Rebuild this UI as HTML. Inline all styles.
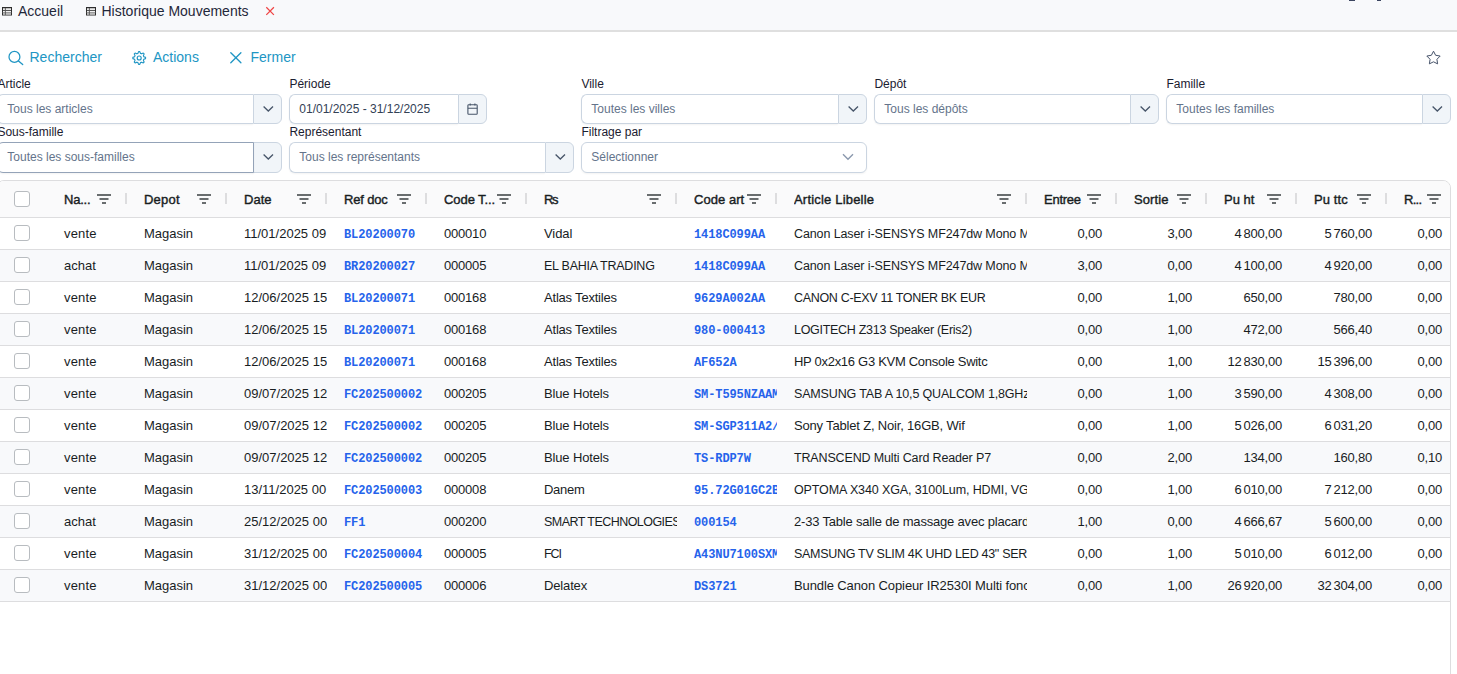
<!DOCTYPE html>
<html lang="fr"><head><meta charset="utf-8"><title>Historique Mouvements</title>
<style>
*{box-sizing:border-box}
html,body{margin:0;padding:0}
body{width:1457px;height:674px;overflow:hidden;position:relative;background:#fff;font-family:"Liberation Sans",sans-serif;color:#1f2937}
.abs{position:absolute}
#topbar{position:absolute;left:0;top:0;width:1457px;height:32px;background:#f8f9fb;border-bottom:2px solid #dfdfdf}
.tab{position:absolute;top:3px;font-size:14px;line-height:16px;color:#1f2739;white-space:nowrap}
.tb{position:absolute;top:49px;font-size:14px;line-height:16px;color:#2196c4;white-space:nowrap}
.lbl{position:absolute;font-size:12px;line-height:14px;color:#1b2030;white-space:nowrap}
.fld{position:absolute;height:30px;border:1px solid #cbd5e1;border-radius:6px;background:#fff;box-shadow:0 1px 2px rgba(18,18,23,.05);font-size:12px;line-height:28px;color:#64748b;padding-left:9.3px;white-space:nowrap;overflow:hidden}
.fld.in{border-radius:6px 0 0 6px;border-right:none}
.btn{position:absolute;height:30px;width:29px;border:1px solid #cbd5e1;border-radius:0 6px 6px 0;background:#f1f5f9}
.btn svg{position:absolute;left:0;top:0}
svg{display:block;overflow:visible}

#grid{position:absolute;left:-4px;top:180px;width:1455px;height:520px;border:1px solid #dddddf;border-radius:8px;overflow:hidden;background:#fff;font-size:13px;color:#181d1f}
#ghead{position:absolute;left:0;top:0;width:1460px;height:37px;background:#fafafb;border-bottom:1px solid #dddddf}
.hc{position:absolute;top:0;height:36px;line-height:38px;font-weight:400;color:#181d1f;-webkit-text-stroke:0.4px #181d1f;white-space:nowrap;overflow:hidden}
.hl{position:absolute;left:17px;top:0;right:32px;overflow:hidden;text-overflow:clip;white-space:nowrap}
.fi{position:absolute;right:16px;top:13px}
.sep{position:absolute;right:0;top:12px;width:2px;height:11px;background:#dddddf}
.row{position:absolute;left:0;width:1460px;height:32px;border-bottom:1px solid #dddddf;background:#fff}
.row.odd{background:#f8f9fb}
.c{position:absolute;top:0;height:31px;line-height:32px;white-space:nowrap;overflow:hidden;padding-left:17px}
.c.t2{letter-spacing:-0.2px}
.c.n{text-align:right;padding-left:0;padding-right:15px;word-spacing:-1.6px;letter-spacing:-0.2px}
.c.m{font-family:"Liberation Mono",monospace;font-weight:700;font-size:12px;color:#2563eb;letter-spacing:-0.1px;line-height:34px}
.cb{position:absolute;left:17px;width:16px;height:16px;border:1px solid #b8bcc0;border-radius:3px;background:#fff}
</style></head>
<body>
<div id="topbar"><svg class="abs" style="left:2px;top:6.7px" width="10" height="8.5" viewBox="0 0 10 8.5"><rect x="0.5" y="0.5" width="9" height="7.5" fill="#fff" stroke="#2e2e2e" stroke-width="1"/><rect x="1" y="5.4" width="8" height="2.2" fill="#b9b9b9"/><rect x="0" y="0" width="10" height="1.3" fill="#2e2e2e"/><rect x="0.5" y="2.9" width="9" height="0.9" fill="#2e2e2e"/><rect x="0.5" y="4.9" width="9" height="0.7" fill="#777"/><rect x="2.9" y="1" width="0.9" height="7" fill="#555"/></svg><div class="tab" style="left:18px">Accueil</div><svg class="abs" style="left:85.9px;top:6.7px" width="10" height="8.5" viewBox="0 0 10 8.5"><rect x="0.5" y="0.5" width="9" height="7.5" fill="#fff" stroke="#2e2e2e" stroke-width="1"/><rect x="1" y="5.4" width="8" height="2.2" fill="#b9b9b9"/><rect x="0" y="0" width="10" height="1.3" fill="#2e2e2e"/><rect x="0.5" y="2.9" width="9" height="0.9" fill="#2e2e2e"/><rect x="0.5" y="4.9" width="9" height="0.7" fill="#777"/><rect x="2.9" y="1" width="0.9" height="7" fill="#555"/></svg><div class="tab" style="left:101.5px">Historique Mouvements</div><svg class="abs" style="left:265px;top:6px" width="10" height="10" viewBox="0 0 10 10"><path d="M1.3 1.3L8.9 8.9M8.9 1.3L1.3 8.9" stroke="#ef4444" stroke-width="1.25" fill="none"/></svg><div class="abs" style="left:1349px;top:0;width:6px;height:1px;background:#3b4560"></div><div class="abs" style="left:1377px;top:0;width:4px;height:1px;background:#3b4560"></div></div>
<svg class="abs" style="left:7px;top:49px" width="18" height="18" viewBox="0 0 18 18"><circle cx="7.45" cy="7.9" r="5.45" fill="none" stroke="#2196c4" stroke-width="1.25"/><path d="M11.5 11.9L15.7 15.6" stroke="#2196c4" stroke-width="1.3" fill="none" stroke-linecap="round"/></svg><div class="tb" style="left:29.5px">Rechercher</div><svg class="abs" style="left:132px;top:51px" width="14" height="14" viewBox="0 0 14 14"><path d="M5.93 2.37 L6.60 0.63 L7.80 0.63 L8.47 2.37 L9.58 2.83 L11.28 2.07 L12.13 2.92 L11.37 4.62 L11.83 5.73 L13.57 6.40 L13.57 7.60 L11.83 8.27 L11.37 9.38 L12.13 11.08 L11.28 11.93 L9.58 11.17 L8.47 11.63 L7.80 13.37 L6.60 13.37 L5.93 11.63 L4.82 11.17 L3.12 11.93 L2.27 11.08 L3.03 9.38 L2.57 8.27 L0.83 7.60 L0.83 6.40 L2.57 5.73 L3.03 4.62 L2.27 2.92 L3.12 2.07 L4.82 2.83 Z" fill="none" stroke="#2196c4" stroke-width="1.15" stroke-linejoin="round"/><circle cx="7.2" cy="7" r="2.0" fill="none" stroke="#2196c4" stroke-width="1.15"/></svg><div class="tb" style="left:153px">Actions</div><svg class="abs" style="left:230px;top:52px" width="12" height="12" viewBox="0 0 12 12"><path d="M0.8 0.8L10.9 10.8M10.9 0.8L0.8 10.8" stroke="#2196c4" stroke-width="1.35" fill="none" stroke-linecap="round"/></svg><div class="tb" style="left:250.5px">Fermer</div><svg class="abs" style="left:1426px;top:50px" width="16" height="16" viewBox="0 0 16 16"><path d="M7.50 1.20 L9.62 5.29 L14.16 6.04 L10.92 9.31 L11.61 13.86 L7.50 11.80 L3.39 13.86 L4.08 9.31 L0.84 6.04 L5.38 5.29 Z" fill="none" stroke="#46536a" stroke-width="1.0" stroke-linejoin="round"/></svg>
<div class="lbl" style="left:-2.6px;top:77px">Article</div><div class="fld in" style="left:-3px;top:94px;width:256px;height:30px;">Tous les articles</div><div class="btn" style="left:253px;top:94px;height:30px"><svg width="29" height="30" viewBox="0 0 29 30"><path d="M9.6 11.5L14.3 16L19 11.5" fill="none" stroke="#475569" stroke-width="1.3"/></svg></div><div class="lbl" style="left:289.4px;top:77px">Période</div><div class="fld in" style="left:289px;top:94px;width:169px;height:30px;color:#334155;">01/01/2025 - 31/12/2025</div><div class="btn" style="left:458px;top:94px;height:30px"><svg width="29" height="30" viewBox="0 0 29 30"><rect x="8.9" y="9.7" width="9.3" height="9.5" rx="0.8" fill="none" stroke="#475569" stroke-width="1.1"/><path d="M8.9 13.2H18.2M11.2 8.5V10.6M15.9 8.5V10.6" stroke="#475569" stroke-width="1.1" fill="none"/></svg></div><div class="lbl" style="left:581.4px;top:77px">Ville</div><div class="fld in" style="left:581px;top:94px;width:257px;height:30px;">Toutes les villes</div><div class="btn" style="left:838px;top:94px;height:30px"><svg width="29" height="30" viewBox="0 0 29 30"><path d="M9.6 11.5L14.3 16L19 11.5" fill="none" stroke="#475569" stroke-width="1.3"/></svg></div><div class="lbl" style="left:874.4px;top:77px">Dépôt</div><div class="fld in" style="left:874px;top:94px;width:256px;height:30px;">Tous les dépôts</div><div class="btn" style="left:1130px;top:94px;height:30px"><svg width="29" height="30" viewBox="0 0 29 30"><path d="M9.6 11.5L14.3 16L19 11.5" fill="none" stroke="#475569" stroke-width="1.3"/></svg></div><div class="lbl" style="left:1166.4px;top:77px">Famille</div><div class="fld in" style="left:1166px;top:94px;width:256px;height:30px;">Toutes les familles</div><div class="btn" style="left:1422px;top:94px;height:30px"><svg width="29" height="30" viewBox="0 0 29 30"><path d="M9.6 11.5L14.3 16L19 11.5" fill="none" stroke="#475569" stroke-width="1.3"/></svg></div><div class="lbl" style="left:-2.6px;top:125px">Sous-famille</div><div class="fld in" style="left:-3px;top:142px;width:257px;height:31px;border-color:#94a3b8;border-right:1px solid #94a3b8;z-index:1;">Toutes les sous-familles</div><div class="btn" style="left:253px;top:142px;height:31px"><svg width="29" height="30" viewBox="0 0 29 30"><path d="M9.6 11.5L14.3 16L19 11.5" fill="none" stroke="#475569" stroke-width="1.3"/></svg></div><div class="lbl" style="left:289.4px;top:125px">Représentant</div><div class="fld in" style="left:289px;top:142px;width:256px;height:31px;">Tous les représentants</div><div class="btn" style="left:545px;top:142px;height:31px"><svg width="29" height="30" viewBox="0 0 29 30"><path d="M9.6 11.5L14.3 16L19 11.5" fill="none" stroke="#475569" stroke-width="1.3"/></svg></div><div class="lbl" style="left:581.4px;top:125px">Filtrage par</div><div class="fld" style="left:581px;top:142px;width:286px;height:31px;">Sélectionner</div><svg class="abs" style="left:842.0px;top:153.3px" width="12" height="8" viewBox="0 0 12 8"><path d="M1 1.2L6 6.2L11 1.2" fill="none" stroke="#8a98ad" stroke-width="1.35"/></svg>
<div id="grid">
<div id="ghead"><div class="hc" style="left:0px;width:50px"><div class="cb" style="top:10px"></div></div><div class="hc" style="left:50px;width:80px"><div class="hl" style="letter-spacing:-0.21px">Na...</div><svg class="fi" width="14" height="10" viewBox="0 0 14 10"><path d="M0 1H14M2.5 5H11.5M5 9H9" stroke="#3a3f42" stroke-width="1.6" fill="none"/></svg><div class="sep"></div></div><div class="hc" style="left:130px;width:100px"><div class="hl" style="letter-spacing:0.22px">Depot</div><svg class="fi" width="14" height="10" viewBox="0 0 14 10"><path d="M0 1H14M2.5 5H11.5M5 9H9" stroke="#3a3f42" stroke-width="1.6" fill="none"/></svg><div class="sep"></div></div><div class="hc" style="left:230px;width:100px"><div class="hl" style="letter-spacing:0.01px">Date</div><svg class="fi" width="14" height="10" viewBox="0 0 14 10"><path d="M0 1H14M2.5 5H11.5M5 9H9" stroke="#3a3f42" stroke-width="1.6" fill="none"/></svg><div class="sep"></div></div><div class="hc" style="left:330px;width:100px"><div class="hl" style="letter-spacing:-0.16px">Ref doc</div><svg class="fi" width="14" height="10" viewBox="0 0 14 10"><path d="M0 1H14M2.5 5H11.5M5 9H9" stroke="#3a3f42" stroke-width="1.6" fill="none"/></svg><div class="sep"></div></div><div class="hc" style="left:430px;width:100px"><div class="hl" style="letter-spacing:-0.07px">Code T...</div><svg class="fi" width="14" height="10" viewBox="0 0 14 10"><path d="M0 1H14M2.5 5H11.5M5 9H9" stroke="#3a3f42" stroke-width="1.6" fill="none"/></svg><div class="sep"></div></div><div class="hc" style="left:530px;width:150px"><div class="hl" style="letter-spacing:-1.39px">Rs</div><svg class="fi" width="14" height="10" viewBox="0 0 14 10"><path d="M0 1H14M2.5 5H11.5M5 9H9" stroke="#3a3f42" stroke-width="1.6" fill="none"/></svg><div class="sep"></div></div><div class="hc" style="left:680px;width:100px"><div class="hl" style="letter-spacing:0.05px">Code art</div><svg class="fi" width="14" height="10" viewBox="0 0 14 10"><path d="M0 1H14M2.5 5H11.5M5 9H9" stroke="#3a3f42" stroke-width="1.6" fill="none"/></svg><div class="sep"></div></div><div class="hc" style="left:780px;width:250px"><div class="hl" style="letter-spacing:0.19px">Article Libelle</div><svg class="fi" width="14" height="10" viewBox="0 0 14 10"><path d="M0 1H14M2.5 5H11.5M5 9H9" stroke="#3a3f42" stroke-width="1.6" fill="none"/></svg><div class="sep"></div></div><div class="hc" style="left:1030px;width:90px"><div class="hl" style="letter-spacing:-0.25px">Entree</div><svg class="fi" width="14" height="10" viewBox="0 0 14 10"><path d="M0 1H14M2.5 5H11.5M5 9H9" stroke="#3a3f42" stroke-width="1.6" fill="none"/></svg><div class="sep"></div></div><div class="hc" style="left:1120px;width:90px"><div class="hl" style="letter-spacing:0.09px">Sortie</div><svg class="fi" width="14" height="10" viewBox="0 0 14 10"><path d="M0 1H14M2.5 5H11.5M5 9H9" stroke="#3a3f42" stroke-width="1.6" fill="none"/></svg><div class="sep"></div></div><div class="hc" style="left:1210px;width:90px"><div class="hl" style="letter-spacing:-0.01px">Pu ht</div><svg class="fi" width="14" height="10" viewBox="0 0 14 10"><path d="M0 1H14M2.5 5H11.5M5 9H9" stroke="#3a3f42" stroke-width="1.6" fill="none"/></svg><div class="sep"></div></div><div class="hc" style="left:1300px;width:90px"><div class="hl" style="letter-spacing:0.11px">Pu ttc</div><svg class="fi" width="14" height="10" viewBox="0 0 14 10"><path d="M0 1H14M2.5 5H11.5M5 9H9" stroke="#3a3f42" stroke-width="1.6" fill="none"/></svg><div class="sep"></div></div><div class="hc" style="left:1390px;width:70px"><div class="hl" style="letter-spacing:-0.73px">R...</div><svg class="fi" width="14" height="10" viewBox="0 0 14 10"><path d="M0 1H14M2.5 5H11.5M5 9H9" stroke="#3a3f42" stroke-width="1.6" fill="none"/></svg><div class="sep"></div></div></div>
<div class="row" style="top:37px"><div class="cb" style="top:7px"></div><div class="c t" style="left:50px;width:80px;letter-spacing:0.16px">vente</div><div class="c t" style="left:130px;width:100px;letter-spacing:-0.01px">Magasin</div><div class="c t" style="left:230px;width:100px">11/01/2025 09</div><div class="c m" style="left:330px;width:100px">BL20200070</div><div class="c t2" style="left:430px;width:100px">000010</div><div class="c t" style="left:530px;width:150px;letter-spacing:-0.07px">Vidal</div><div class="c m" style="left:680px;width:100px">1418C099AA</div><div class="c t" style="left:780px;width:250px;font-size:12.5px;letter-spacing:-0.11px">Canon Laser i-SENSYS MF247dw Mono M</div><div class="c n" style="left:1030px;width:90px">0,00</div><div class="c n" style="left:1120px;width:90px">3,00</div><div class="c n" style="left:1210px;width:90px">4 800,00</div><div class="c n" style="left:1300px;width:90px">5 760,00</div><div class="c n" style="left:1390px;width:70px">0,00</div></div>
<div class="row odd" style="top:69px"><div class="cb" style="top:7px"></div><div class="c t" style="left:50px;width:80px">achat</div><div class="c t" style="left:130px;width:100px;letter-spacing:-0.01px">Magasin</div><div class="c t" style="left:230px;width:100px">11/01/2025 09</div><div class="c m" style="left:330px;width:100px">BR20200027</div><div class="c t2" style="left:430px;width:100px">000005</div><div class="c t" style="left:530px;width:150px;font-size:12.5px;letter-spacing:-0.25px">EL BAHIA TRADING</div><div class="c m" style="left:680px;width:100px">1418C099AA</div><div class="c t" style="left:780px;width:250px;font-size:12.5px;letter-spacing:-0.11px">Canon Laser i-SENSYS MF247dw Mono M</div><div class="c n" style="left:1030px;width:90px">3,00</div><div class="c n" style="left:1120px;width:90px">0,00</div><div class="c n" style="left:1210px;width:90px">4 100,00</div><div class="c n" style="left:1300px;width:90px">4 920,00</div><div class="c n" style="left:1390px;width:70px">0,00</div></div>
<div class="row" style="top:101px"><div class="cb" style="top:7px"></div><div class="c t" style="left:50px;width:80px;letter-spacing:0.16px">vente</div><div class="c t" style="left:130px;width:100px;letter-spacing:-0.01px">Magasin</div><div class="c t" style="left:230px;width:100px">12/06/2025 15</div><div class="c m" style="left:330px;width:100px">BL20200071</div><div class="c t2" style="left:430px;width:100px">000168</div><div class="c t" style="left:530px;width:150px;letter-spacing:-0.20px">Atlas Textiles</div><div class="c m" style="left:680px;width:100px">9629A002AA</div><div class="c t" style="left:780px;width:250px;font-size:12.5px;letter-spacing:-0.32px">CANON C-EXV 11 TONER BK EUR</div><div class="c n" style="left:1030px;width:90px">0,00</div><div class="c n" style="left:1120px;width:90px">1,00</div><div class="c n" style="left:1210px;width:90px">650,00</div><div class="c n" style="left:1300px;width:90px">780,00</div><div class="c n" style="left:1390px;width:70px">0,00</div></div>
<div class="row odd" style="top:133px"><div class="cb" style="top:7px"></div><div class="c t" style="left:50px;width:80px;letter-spacing:0.16px">vente</div><div class="c t" style="left:130px;width:100px;letter-spacing:-0.01px">Magasin</div><div class="c t" style="left:230px;width:100px">12/06/2025 15</div><div class="c m" style="left:330px;width:100px">BL20200071</div><div class="c t2" style="left:430px;width:100px">000168</div><div class="c t" style="left:530px;width:150px;letter-spacing:-0.20px">Atlas Textiles</div><div class="c m" style="left:680px;width:100px">980-000413</div><div class="c t" style="left:780px;width:250px;font-size:12.5px;letter-spacing:-0.29px">LOGITECH Z313 Speaker (Eris2)</div><div class="c n" style="left:1030px;width:90px">0,00</div><div class="c n" style="left:1120px;width:90px">1,00</div><div class="c n" style="left:1210px;width:90px">472,00</div><div class="c n" style="left:1300px;width:90px">566,40</div><div class="c n" style="left:1390px;width:70px">0,00</div></div>
<div class="row" style="top:165px"><div class="cb" style="top:7px"></div><div class="c t" style="left:50px;width:80px;letter-spacing:0.16px">vente</div><div class="c t" style="left:130px;width:100px;letter-spacing:-0.01px">Magasin</div><div class="c t" style="left:230px;width:100px">12/06/2025 15</div><div class="c m" style="left:330px;width:100px">BL20200071</div><div class="c t2" style="left:430px;width:100px">000168</div><div class="c t" style="left:530px;width:150px;letter-spacing:-0.20px">Atlas Textiles</div><div class="c m" style="left:680px;width:100px">AF652A</div><div class="c t" style="left:780px;width:250px;letter-spacing:-0.29px">HP 0x2x16 G3 KVM Console Switc</div><div class="c n" style="left:1030px;width:90px">0,00</div><div class="c n" style="left:1120px;width:90px">1,00</div><div class="c n" style="left:1210px;width:90px">12 830,00</div><div class="c n" style="left:1300px;width:90px">15 396,00</div><div class="c n" style="left:1390px;width:70px">0,00</div></div>
<div class="row odd" style="top:197px"><div class="cb" style="top:7px"></div><div class="c t" style="left:50px;width:80px;letter-spacing:0.16px">vente</div><div class="c t" style="left:130px;width:100px;letter-spacing:-0.01px">Magasin</div><div class="c t" style="left:230px;width:100px">09/07/2025 12</div><div class="c m" style="left:330px;width:100px">FC202500002</div><div class="c t2" style="left:430px;width:100px">000205</div><div class="c t" style="left:530px;width:150px;letter-spacing:-0.14px">Blue Hotels</div><div class="c m" style="left:680px;width:100px">SM-T595NZAAM</div><div class="c t" style="left:780px;width:250px;font-size:12.5px;letter-spacing:-0.16px">SAMSUNG TAB A 10,5 QUALCOM 1,8GHz</div><div class="c n" style="left:1030px;width:90px">0,00</div><div class="c n" style="left:1120px;width:90px">1,00</div><div class="c n" style="left:1210px;width:90px">3 590,00</div><div class="c n" style="left:1300px;width:90px">4 308,00</div><div class="c n" style="left:1390px;width:70px">0,00</div></div>
<div class="row" style="top:229px"><div class="cb" style="top:7px"></div><div class="c t" style="left:50px;width:80px;letter-spacing:0.16px">vente</div><div class="c t" style="left:130px;width:100px;letter-spacing:-0.01px">Magasin</div><div class="c t" style="left:230px;width:100px">09/07/2025 12</div><div class="c m" style="left:330px;width:100px">FC202500002</div><div class="c t2" style="left:430px;width:100px">000205</div><div class="c t" style="left:530px;width:150px;letter-spacing:-0.14px">Blue Hotels</div><div class="c m" style="left:680px;width:100px">SM-SGP311A2/</div><div class="c t" style="left:780px;width:250px;letter-spacing:-0.18px">Sony Tablet Z, Noir, 16GB, Wif</div><div class="c n" style="left:1030px;width:90px">0,00</div><div class="c n" style="left:1120px;width:90px">1,00</div><div class="c n" style="left:1210px;width:90px">5 026,00</div><div class="c n" style="left:1300px;width:90px">6 031,20</div><div class="c n" style="left:1390px;width:70px">0,00</div></div>
<div class="row odd" style="top:261px"><div class="cb" style="top:7px"></div><div class="c t" style="left:50px;width:80px;letter-spacing:0.16px">vente</div><div class="c t" style="left:130px;width:100px;letter-spacing:-0.01px">Magasin</div><div class="c t" style="left:230px;width:100px">09/07/2025 12</div><div class="c m" style="left:330px;width:100px">FC202500002</div><div class="c t2" style="left:430px;width:100px">000205</div><div class="c t" style="left:530px;width:150px;letter-spacing:-0.14px">Blue Hotels</div><div class="c m" style="left:680px;width:100px">TS-RDP7W</div><div class="c t" style="left:780px;width:250px;font-size:12.5px;letter-spacing:-0.15px">TRANSCEND Multi Card Reader P7</div><div class="c n" style="left:1030px;width:90px">0,00</div><div class="c n" style="left:1120px;width:90px">2,00</div><div class="c n" style="left:1210px;width:90px">134,00</div><div class="c n" style="left:1300px;width:90px">160,80</div><div class="c n" style="left:1390px;width:70px">0,10</div></div>
<div class="row" style="top:293px"><div class="cb" style="top:7px"></div><div class="c t" style="left:50px;width:80px;letter-spacing:0.16px">vente</div><div class="c t" style="left:130px;width:100px;letter-spacing:-0.01px">Magasin</div><div class="c t" style="left:230px;width:100px">13/11/2025 00</div><div class="c m" style="left:330px;width:100px">FC202500003</div><div class="c t2" style="left:430px;width:100px">000008</div><div class="c t" style="left:530px;width:150px;letter-spacing:-0.30px">Danem</div><div class="c m" style="left:680px;width:100px">95.72G01GC2B</div><div class="c t" style="left:780px;width:250px;font-size:12.5px;letter-spacing:-0.12px">OPTOMA X340 XGA, 3100Lum, HDMI, VG</div><div class="c n" style="left:1030px;width:90px">0,00</div><div class="c n" style="left:1120px;width:90px">1,00</div><div class="c n" style="left:1210px;width:90px">6 010,00</div><div class="c n" style="left:1300px;width:90px">7 212,00</div><div class="c n" style="left:1390px;width:70px">0,00</div></div>
<div class="row odd" style="top:325px"><div class="cb" style="top:7px"></div><div class="c t" style="left:50px;width:80px">achat</div><div class="c t" style="left:130px;width:100px;letter-spacing:-0.01px">Magasin</div><div class="c t" style="left:230px;width:100px">25/12/2025 00</div><div class="c m" style="left:330px;width:100px">FF1</div><div class="c t2" style="left:430px;width:100px">000200</div><div class="c t" style="left:530px;width:150px;font-size:12.5px;letter-spacing:-0.54px">SMART TECHNOLOGIES</div><div class="c m" style="left:680px;width:100px">000154</div><div class="c t" style="left:780px;width:250px;letter-spacing:-0.19px">2-33 Table salle de massage avec placard</div><div class="c n" style="left:1030px;width:90px">1,00</div><div class="c n" style="left:1120px;width:90px">0,00</div><div class="c n" style="left:1210px;width:90px">4 666,67</div><div class="c n" style="left:1300px;width:90px">5 600,00</div><div class="c n" style="left:1390px;width:70px">0,00</div></div>
<div class="row" style="top:357px"><div class="cb" style="top:7px"></div><div class="c t" style="left:50px;width:80px;letter-spacing:0.16px">vente</div><div class="c t" style="left:130px;width:100px;letter-spacing:-0.01px">Magasin</div><div class="c t" style="left:230px;width:100px">31/12/2025 00</div><div class="c m" style="left:330px;width:100px">FC202500004</div><div class="c t2" style="left:430px;width:100px">000005</div><div class="c t" style="left:530px;width:150px;font-size:12.5px;letter-spacing:-1.05px">FCI</div><div class="c m" style="left:680px;width:100px">A43NU7100SXM</div><div class="c t" style="left:780px;width:250px;font-size:12.5px;letter-spacing:-0.30px">SAMSUNG TV SLIM 4K UHD LED 43&quot; SER</div><div class="c n" style="left:1030px;width:90px">0,00</div><div class="c n" style="left:1120px;width:90px">1,00</div><div class="c n" style="left:1210px;width:90px">5 010,00</div><div class="c n" style="left:1300px;width:90px">6 012,00</div><div class="c n" style="left:1390px;width:70px">0,00</div></div>
<div class="row odd" style="top:389px"><div class="cb" style="top:7px"></div><div class="c t" style="left:50px;width:80px;letter-spacing:0.16px">vente</div><div class="c t" style="left:130px;width:100px;letter-spacing:-0.01px">Magasin</div><div class="c t" style="left:230px;width:100px">31/12/2025 00</div><div class="c m" style="left:330px;width:100px">FC202500005</div><div class="c t2" style="left:430px;width:100px">000006</div><div class="c t" style="left:530px;width:150px;letter-spacing:-0.15px">Delatex</div><div class="c m" style="left:680px;width:100px">DS3721</div><div class="c t" style="left:780px;width:250px;letter-spacing:-0.11px">Bundle Canon Copieur IR2530I Multi fonc</div><div class="c n" style="left:1030px;width:90px">0,00</div><div class="c n" style="left:1120px;width:90px">1,00</div><div class="c n" style="left:1210px;width:90px">26 920,00</div><div class="c n" style="left:1300px;width:90px">32 304,00</div><div class="c n" style="left:1390px;width:70px">0,00</div></div>
</div>
</body></html>
